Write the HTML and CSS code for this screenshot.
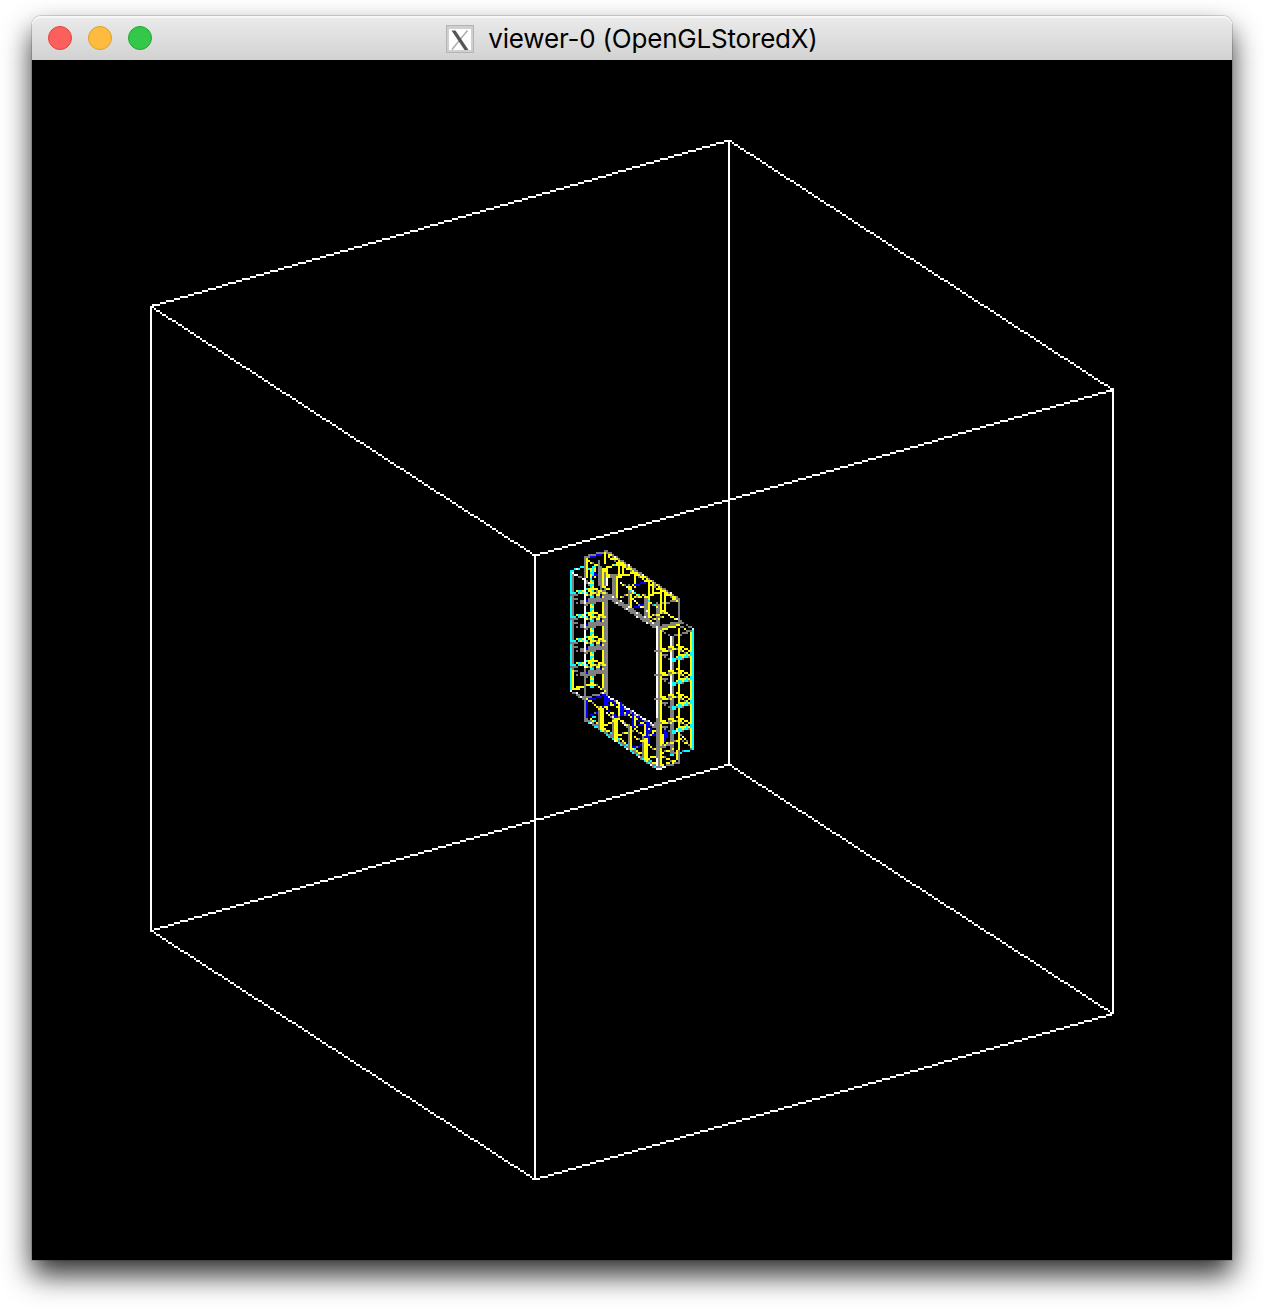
FILE: index.html
```html
<!DOCTYPE html>
<html lang="en">
<head>
<meta charset="utf-8">
<title>viewer-0 (OpenGLStoredX)</title>
<link rel="stylesheet" href="styles.css">
</head>
<body>
<main class="window">
  <header class="titlebar">
    <div class="controls">
      <span class="control close"></span>
      <span class="control minimize"></span>
      <span class="control zoom"></span>
    </div>
    <div class="caption">
      <svg class="x-icon" viewBox="0 0 28 28" aria-hidden="true">
        <rect x="0.5" y="0.5" width="27" height="27" fill="#cfcfcf" stroke="#b4b4b4"/>
        <rect x="3" y="4" width="22" height="21" fill="#fff"/>
        <path d="M21.5 5.5 L6 24.5" stroke="#aaa" stroke-width="1.4"/>
        <path d="M5.5 5.5 H9.5 L22.5 25 H18.5 Z" fill="#555"/>
      </svg>
      <h1 class="title">viewer-0 (OpenGLStoredX)</h1>
    </div>
  </header>
  <canvas class="scene" id="scene" width="600" height="600"></canvas>
</main>
<script src="scene.js"></script>
</body>
</html>
```
FILE: styles.css
```css
* {
  box-sizing: border-box;
}

body {
  margin: 0;
  padding: 16px 32px 48px;
  height: 1308px;
  overflow: hidden;
  background: #fff;
}

.window {
  width: 1200px;
  height: 1244px;
  border-radius: 9px 9px 0 0;
  box-shadow: 0 0 0 1px rgba(0, 0, 0, 0.14), 0 15px 29px rgba(0, 0, 0, 0.82);
}

.titlebar {
  display: grid;
  grid-template-columns: 156px 1fr 156px;
  align-items: center;
  height: 44px;
  border-radius: 9px 9px 0 0;
  background: linear-gradient(#ebebeb, #d2d2d2);
  box-shadow: inset 0 2px 0 #f6f6f6;
}

.controls {
  display: flex;
  gap: 16px;
  padding-left: 16px;
}

.control {
  width: 24px;
  height: 24px;
  border: 1.5px solid;
  border-radius: 50%;
}

.close {
  background: #fc605c;
  border-color: #e2443f;
}

.minimize {
  background: #fdbc40;
  border-color: #dfa023;
}

.zoom {
  background: #34c84a;
  border-color: #1fa930;
}

.caption {
  display: flex;
  justify-content: center;
  align-items: center;
  gap: 14px;
  padding-top: 2px;
}

.x-icon {
  width: 28px;
  height: 28px;
}

.title {
  margin: 0;
  font: 400 26px/30px Inter, "Liberation Sans", sans-serif;
  letter-spacing: -0.2px;
  white-space: nowrap;
  color: #000;
}

.scene {
  display: block;
  width: 1200px;
  height: 1200px;
  background: #000;
  image-rendering: pixelated;
}
```
FILE: scene.js
```js
const ctx = document.getElementById("scene").getContext("2d");

const palette = {
  w: "#ffffff",
  g: "#808080",
  y: "#ffff00",
  c: "#00ffff",
  b: "#0000ff",
  k: "#000000"
};

// Aliased line; the pattern letters repeat along it and "." leaves a gap.
function line(pattern, x1, y1, x2, y2) {
  const steps = Math.max(Math.abs(x2 - x1), Math.abs(y2 - y1), 1);
  for (let i = 0; i <= steps; i++) {
    const key = pattern[i % pattern.length];
    if (key === ".") continue;
    ctx.fillStyle = palette[key];
    ctx.fillRect(Math.round(x1 + (x2 - x1) * i / steps), Math.round(y1 + (y2 - y1) * i / steps), 1, 1);
  }
}

function draw(lines) {
  lines.forEach(l => line(...l));
}

ctx.fillStyle = palette.k;
ctx.fillRect(0, 0, 600, 600);

// World volume
draw([
  ["w", 59, 122.7, 348, 39.7], ["w", 348, 39.7, 540, 164.4], ["w", 540, 164.4, 251, 247.3], ["w", 251, 247.3, 59, 122.7],
  ["w", 59, 434.8, 348, 351.8], ["w", 348, 351.8, 540, 476.4], ["w", 540, 476.4, 251, 559.3], ["w", 251, 559.3, 59, 434.8],
  ["w", 59, 123, 59, 435], ["w", 348, 40, 348, 352], ["w", 540, 164, 540, 476], ["w", 251, 247, 251, 559]
]);

// Top row of crystals
draw([
  ["g", 276, 248, 287, 245], ["g", 276, 249, 285, 246], ["g", 276, 248, 276, 260],
  ["ggggwgg", 287, 245, 323, 269], ["gyygyyy", 287, 246, 322, 269], ["yyyg", 288, 248, 322, 270],
  ["g", 323, 269, 323, 281],
  ["g", 313, 272, 323, 269], ["g", 312, 271, 312, 283], ["g", 313, 272, 313, 283],
  ["b", 279, 248, 284, 247], ["y", 277, 249, 277, 258], ["yyg", 278, 250, 285, 254],
  ["y", 286, 246, 286, 251], ["yyb", 281, 254, 281, 258], ["c", 280, 253, 280, 258], ["b", 279, 258, 282, 257],
  ["g", 283, 250, 283, 262], ["g", 284, 253, 284, 264], ["y", 285, 254, 285, 263],
  ["yycy", 285, 254, 294, 251], ["yyyg", 286, 255, 291, 259], ["y", 287, 253, 287, 258],
  ["w", 287, 258, 287, 262], ["g", 286, 256, 286, 264], ["y", 285, 263, 288, 264],
  ["y", 293, 251, 293, 257], ["y", 295, 252, 295, 256], ["yyg", 287, 258, 294, 257],
  ["g", 290, 257, 290, 267], ["g", 291, 257, 291, 268], ["y", 292, 259, 292, 269],
  ["yyy", 292, 258, 301, 256], ["y", 301, 256, 301, 263], ["g", 298, 262, 298, 273],
  ["y", 299, 264, 299, 274], ["yyyg", 298, 263, 308, 260], ["b", 301, 262, 306, 261],
  ["wyg", 294, 261, 301, 266], ["ygg", 294, 268, 300, 266], ["cy", 299, 265, 304, 268],
  ["y", 308, 260, 308, 266], ["y", 310, 262, 310, 266], ["g", 306, 267, 306, 280], ["g", 307, 268, 307, 280],
  ["y", 308, 268, 308, 279], ["y", 306, 268, 315, 265], ["y", 314, 266, 314, 276],
  ["y", 316, 267, 316, 276], ["yyyg", 299, 269, 306, 267], ["cyg", 308, 270, 313, 274],
  ["b", 299, 274, 305, 272], ["wyg", 301, 270, 307, 275], ["yyyg", 308, 278, 315, 276],
  ["yyyw", 315, 275, 323, 280],
  ["g", 277, 261, 284, 266], ["ggwg", 284, 264, 312, 282], ["g", 284, 265, 312, 283], ["wgggg", 287, 268, 312, 284],
  ["g", 312, 283, 324, 280], ["gy", 308, 280, 315, 278]
]);

// Left column of crystals
draw([
  ["g", 270, 257, 270, 302], ["y", 270, 303, 270, 315], ["c", 269, 255, 269, 314],
  ["g", 286, 264, 286, 315], ["g", 287, 266, 287, 316],
  ["y", 285, 268, 285, 314], ["cccw", 269, 255, 275, 253], ["c", 278, 254, 281, 253],
  ["w", 270, 256, 272, 257], ["wgg", 272, 257, 278, 261],
  ["yyc", 279, 254, 279, 313], ["cyc", 280, 260, 280, 313],
  ["w", 276, 259, 276, 304]
]);
for (const b of [267, 279, 291, 303]) {
  draw([
    ["gkgg", 270, b + 1, 277, b + 4], ["ggkg", 271, b + 2, 276, b + 3], ["gkg", 272, b + 4, 276, b + 4],
    ["ccy", 270, b - 1, 280, b - 4], ["yccc", 270, b, 280, b - 2], ["g", 269, b, 272, b],
    ["y", 280, b - 4, 286, b - 1], ["yyg", 279, b - 2, 285, b + 1], ["yg", 277, b, 284, b - 1],
    ["g", 276, b + 3, 286, b], ["g", 275, b + 4, 287, b + 1], ["g", 276, b + 5, 287, b + 2],
    ["b", 277, b + 3, 277, b + 3], ["b", 284, b + 1, 284, b + 1],
    ["w", 276, b - 4, 276, b + 4]
  ]);
}
draw([
  ["y", 270, 314, 280, 311], ["y", 271, 314, 275, 313], ["yyg", 280, 311, 286, 315],
  ["wgkgg", 269, 315, 277, 320], ["kgwg", 270, 315, 277, 319], ["g", 276, 304, 276, 330]
]);

// Bottom row of crystals
draw([
  ["b", 277, 319, 277, 329], ["g", 277, 318, 286, 316], ["wwgw", 285, 316, 312, 333],
  ["bgbbb", 285, 317, 312, 334], ["yyb", 286, 319, 312, 336], ["b", 278, 319, 284, 318],
  ["g", 277, 329, 312, 353], ["gcwgcc", 277, 330, 312, 354],
  ["yycy", 279, 329, 312, 352], ["yyyg", 277, 319, 284, 324], ["bbg", 279, 327, 285, 325],
  ["c", 280, 328, 281, 328], ["g", 283, 323, 283, 333],
  ["y", 284, 323, 284, 334], ["y", 285, 324, 285, 335], ["b", 286, 317, 286, 323], ["b", 287, 318, 287, 322],
  ["yyb", 283, 324, 292, 321], ["yyb", 286, 323, 292, 328],
  ["b", 294, 321, 294, 327], ["b", 295, 323, 295, 327], ["y", 293, 322, 293, 328],
  ["g", 290, 327, 290, 338], ["y", 291, 328, 291, 339], ["y", 292, 328, 292, 340],
  ["bbg", 291, 328, 300, 326], ["yyy", 286, 332, 291, 330], ["wyg", 287, 326, 291, 329],
  ["b", 300, 327, 300, 332], ["y", 301, 328, 301, 333], ["yyyg", 293, 329, 299, 333],
  ["wwg", 295, 331, 300, 335], ["yyg", 293, 337, 299, 335], ["g", 298, 332, 298, 344],
  ["y", 299, 334, 299, 344], ["bbyb", 300, 333, 308, 331], ["b", 308, 331, 308, 341],
  ["b", 307, 332, 307, 338], ["y", 306, 333, 306, 338], ["yyg", 301, 334, 306, 338],
  ["bbg", 300, 343, 306, 342], ["g", 305, 338, 305, 348], ["y", 306, 338, 306, 349],
  ["y", 307, 338, 307, 350], ["bbgy", 306, 338, 313, 336], ["yyg", 308, 342, 313, 346],
  ["yy", 307, 349, 313, 347], ["yyg", 301, 338, 305, 340], ["g", 309, 332, 312, 334],
  ["yb", 308, 334, 312, 338]
]);

// Right column of crystals
draw([
  ["w", 312, 283, 312, 328], ["g", 312, 329, 312, 348], ["w", 312, 349, 312, 354],
  ["g", 313, 285, 313, 352], ["y", 314, 285, 314, 351],
  ["g", 313, 284, 323, 281], ["y", 315, 284, 323, 282], ["ggg.", 323, 280, 330, 284],
  ["ygg", 323, 282, 329, 286], ["ggk", 315, 285, 319, 288], ["g", 319, 288, 329, 285],
  ["y", 323, 284, 323, 344], ["y", 329, 286, 329, 343], ["c", 330, 285, 330, 344],
  ["w", 330, 284, 330, 284], ["w", 319, 288, 319, 317], ["g", 319, 318, 319, 347], ["g", 320, 289, 320, 346]
]);
for (const b of [300, 312, 324, 336]) {
  draw([
    ["g", 311, b - 5, 323, b - 6], ["yyyk", 314, b - 6, 323, b - 8], ["yyyg", 315, b - 5, 324, b - 6],
    ["yyy", 323, b - 8, 328, b - 5], ["yg", 323, b - 6, 329, b - 3],
    ["ggk", 315, b - 3, 319, b - 1], ["kgg", 315, b - 4, 319, b - 2],
    ["ccy", 320, b - 1, 330, b - 4], ["ccg", 320, b, 330, b - 3], ["y", 323, b - 3, 326, b - 3]
  ]);
  if (b < 324) line("w", 319, b - 4, 319, b + 3);
}
draw([
  ["ccgc", 319, 347, 330, 344], ["yyg", 323, 338, 329, 343], ["wyg", 322, 335, 327, 340],
  ["b", 316, 335, 316, 340], ["b", 317, 336, 317, 338], ["y", 315, 337, 315, 341], ["ygy", 314, 342, 323, 340],
  ["g", 313, 343, 319, 342], ["g", 323, 345, 323, 351], ["y", 322, 345, 322, 350],
  ["yyg", 314, 347, 322, 351], ["yyg", 314, 346, 320, 344], ["g", 312, 353, 323, 351],
  ["yyk", 314, 352, 322, 350], ["w", 312, 354, 316, 353]
]);
```
